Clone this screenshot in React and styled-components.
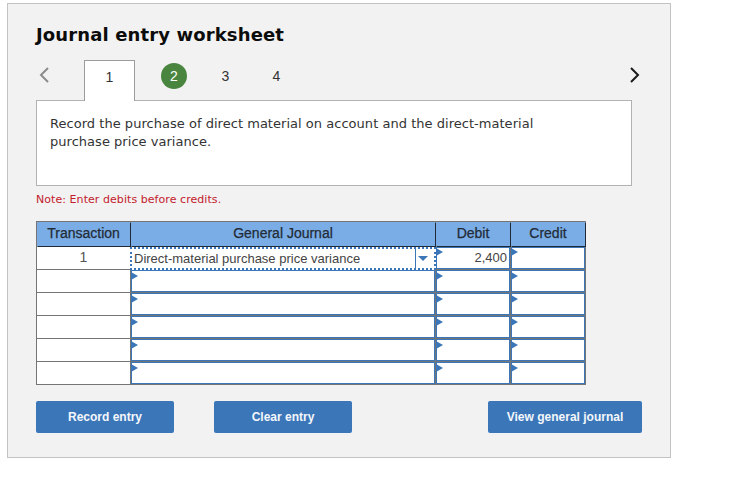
import React from 'react'
import styled, { createGlobalStyle } from 'styled-components'

const GlobalStyle = createGlobalStyle`
  body {
    margin: 0;
    background: #fff;
  }
`

const Page = styled.div`
  padding: 3px 0 0 7px;
`

const Panel = styled.div`
  box-sizing: border-box;
  width: 664px;
  height: 455px;
  padding: 20px 28px 0;
  background: #f2f2f2;
  border: 1px solid #c3c3c3;
`

const Title = styled.h1`
  margin: 0;
  height: 36px;
  font: bold 18px/21px 'DejaVu Sans', Verdana, sans-serif;
  letter-spacing: 0.13px;
  color: #0c0c0c;
`

const TabRow = styled.div`
  display: flex;
  align-items: flex-start;
  width: 596px;
  height: 40px;
`

const Arrow = styled.svg`
  align-self: center;
  flex: none;
  width: 12px;
  height: 16px;
  fill: none;
  stroke: ${(props) => props.$color};
  stroke-width: 2;
`

const PrevArrow = styled(Arrow)`
  margin: 0 34px 10px 2px;
`

const NextArrow = styled(Arrow)`
  margin: 0 -9px 10px auto;
`

const Tab = styled.div`
  position: relative;
  box-sizing: border-box;
  width: 51px;
  height: 41px;
  padding-top: 8px;
  text-align: center;
  font: 14px/17px 'Liberation Sans', Arial, sans-serif;
  color: #333;
  background: #fff;
  border: 1px solid #9c9c9c;
  border-bottom: none;
`

const Step = styled.div`
  width: 51px;
  padding-top: 8px;
  text-align: center;
  font: 14px/17px 'Liberation Sans', Arial, sans-serif;
  color: #333;
`

const DoneStep = styled.div`
  width: 26px;
  height: 26px;
  margin: 3px 0 0 26px;
  border-radius: 50%;
  background: #4a8540;
  color: #fff;
  text-align: center;
  font: 14px/26px 'Liberation Sans', Arial, sans-serif;
`

const StepThree = styled(Step)`
  margin-left: 13px;
`

const Card = styled.div`
  box-sizing: border-box;
  width: 596px;
  height: 86px;
  padding: 14px 13px;
  background: #fff;
  border: 1px solid #b2b2b2;
  font: 13px/18px 'DejaVu Sans', Verdana, sans-serif;
  letter-spacing: 0.03px;
  color: #333;
`

const Note = styled.p`
  margin: 7px 0 14px;
  font: 11px/14px 'DejaVu Sans', Verdana, sans-serif;
  letter-spacing: 0.06px;
  color: #c4202b;
`

const Grid = styled.div`
  display: grid;
  grid-template-columns: 93px 304px 74px 74px;
  grid-template-rows: 24px repeat(6, 22px);
  gap: 1px;
  width: 550px;
  box-sizing: border-box;
  padding: 1px;
  background: #757575;
`

const HeadCell = styled.div`
  background: #7aade6;
  box-shadow: 1px 1px 0 #1f2a36;
  text-align: center;
  font: 14px/23px 'Liberation Sans', Arial, sans-serif;
  -webkit-text-stroke: 0.25px #222b36;
  color: #222b36;
`

const PlainCell = styled.div`
  background: #fff;
  text-align: center;
  font: 14px/20px 'Liberation Sans', Arial, sans-serif;
  color: #555;
`

const InputCell = styled.div`
  position: relative;
  box-sizing: border-box;
  background: #fff;
  border: 1px solid #3b76b8;
  padding-right: 2px;
  text-align: right;
  font: 13px/20px 'Liberation Sans', Arial, sans-serif;
  color: #444;

  &::before {
    content: '';
    position: absolute;
    left: -1px;
    top: ${(props) => props.$markTop}px;
    border-left: 7px solid #3b76b8;
    border-top: 4px solid transparent;
    border-bottom: 4px solid transparent;
  }
`

const FocusCell = styled.div`
  position: relative;
  display: flex;
  align-items: center;
  box-sizing: border-box;
  margin: 0 -1px -1px -1px;
  padding-left: 2px;
  background: #fff;
  border: 2px dotted #3b76b8;
  font: 13px/18px 'Liberation Sans', Arial, sans-serif;
  color: #444;
`

const CellText = styled.span`
  flex: 1;
  white-space: nowrap;
`

const Dropdown = styled.span`
  display: flex;
  align-items: center;
  box-sizing: border-box;
  width: 19px;
  height: 19px;
  padding-left: 2px;
  border-left: 1px solid #3b76b8;
`

const Caret = styled.span`
  border-top: 5px solid #3b76b8;
  border-left: 5px solid transparent;
  border-right: 5px solid transparent;
`

const Actions = styled.div`
  display: flex;
  margin-top: 16px;
  width: 606px;
`

const Button = styled.button`
  box-sizing: border-box;
  width: ${(props) => props.$width}px;
  height: 32px;
  margin-left: ${(props) => props.$left || 0}px;
  padding: 0;
  border: none;
  border-radius: 2px;
  background: #3b76b9;
  color: #f4f7fb;
  font: bold 12px/32px 'Liberation Sans', Arial, sans-serif;
`

const emptyRows = [1, 2, 3, 4, 5]

export default function App() {
  return (
    <Page>
      <GlobalStyle />
      <Panel>
        <Title>Journal entry worksheet</Title>
        <TabRow>
          <PrevArrow $color="#8c8c8c" viewBox="0 0 12 16">
            <path d="M10 1 L3 8 L10 15" />
          </PrevArrow>
          <Tab>1</Tab>
          <DoneStep>2</DoneStep>
          <StepThree>3</StepThree>
          <Step>4</Step>
          <NextArrow $color="#1a1a1a" viewBox="0 0 12 16">
            <path d="M2 1 L9 8 L2 15" />
          </NextArrow>
        </TabRow>
        <Card>
          Record the purchase of direct material on account and the direct-material
          <br />
          purchase price variance.
        </Card>
        <Note>Note: Enter debits before credits.</Note>
        <Grid>
          <HeadCell>Transaction</HeadCell>
          <HeadCell>General Journal</HeadCell>
          <HeadCell>Debit</HeadCell>
          <HeadCell>Credit</HeadCell>
          <PlainCell>1</PlainCell>
          <FocusCell>
            <CellText>Direct-material purchase price variance</CellText>
            <Dropdown>
              <Caret />
            </Dropdown>
          </FocusCell>
          <InputCell $markTop={0}>2,400</InputCell>
          <InputCell $markTop={0} />
          {emptyRows.map((row) => (
            <React.Fragment key={row}>
              <PlainCell />
              <InputCell $markTop={1} />
              <InputCell $markTop={1} />
              <InputCell $markTop={1} />
            </React.Fragment>
          ))}
        </Grid>
        <Actions>
          <Button $width={138}>Record entry</Button>
          <Button $width={138} $left={40}>Clear entry</Button>
          <Button $width={154} $left={136}>View general journal</Button>
        </Actions>
      </Panel>
    </Page>
  )
}
